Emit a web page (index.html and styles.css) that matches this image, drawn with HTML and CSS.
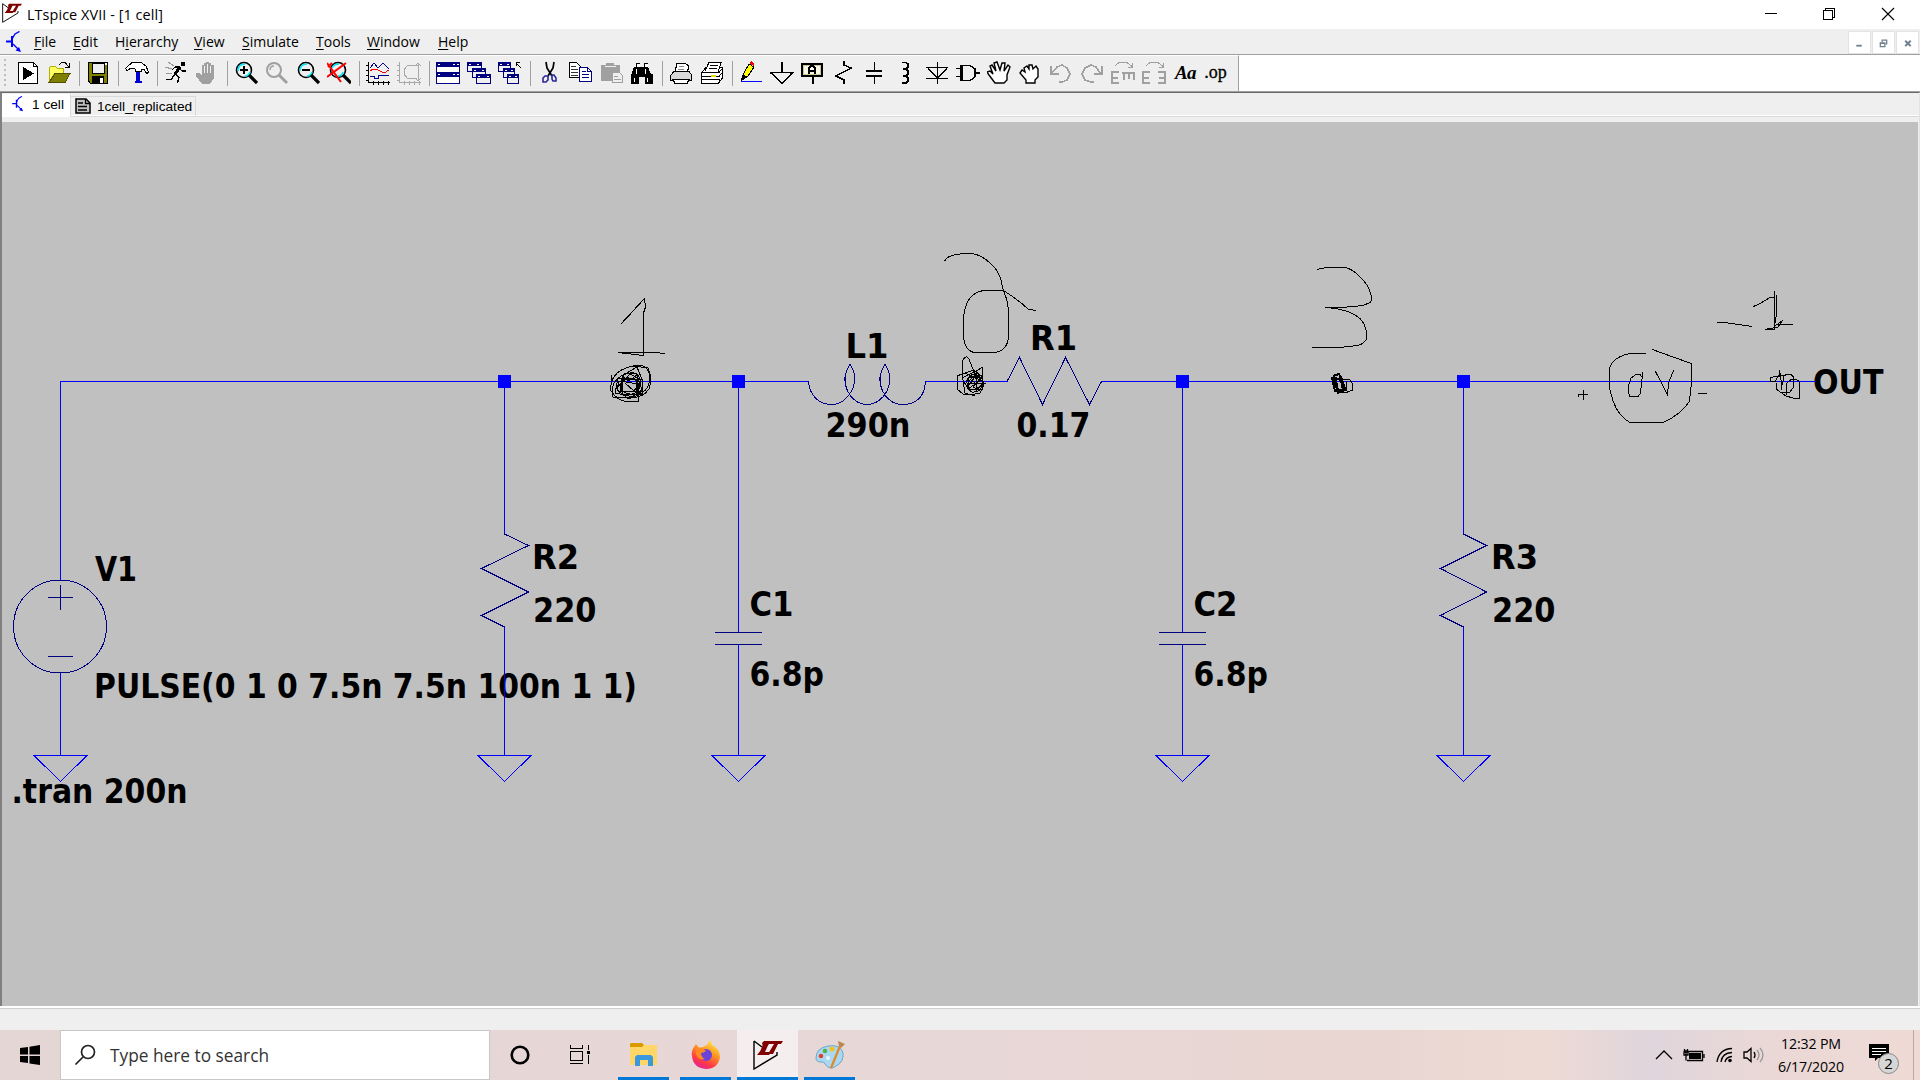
FILE: index.html
```html
<!DOCTYPE html>
<html lang="en">
<head>
<meta charset="utf-8">
<title>LTspice XVII - [1 cell]</title>
<link rel="stylesheet" href="styles.css">
</head>
<body>
<svg class="defs" aria-hidden="true">
  <defs>
    <symbol id="lt" viewBox="0 0 30 30">
      <path d="M1 1V29L24 15V12M1 1L9 7" fill="none" stroke="#000" stroke-width="1.4"/>
      <path d="M11 1H17L12 12H18L16 15H4Q8 11 9 7Q10 5 9 3ZM16 1H30L28 4H25L20 14H15L21 4H16L13 8Z" fill="#800000"/>
    </symbol>
    <symbol id="transistor" viewBox="0 0 16 22">
      <path d="M0 10.500H6M6 5V16" fill="none" stroke="#0000ff" stroke-width="2"/>
      <path d="M6 8L9 3L13.500 .5M7 13L13 19" fill="none" stroke="#0000ff" stroke-width="1.400"/>
      <path d="M15 21L9.500 19.500L13 16Z" fill="#0000ff"/>
    </symbol>
    <symbol id="ground" viewBox="-28 0 56 28"><path d="M-26.500 .5H26.500L0 26.500Z"/></symbol>
  </defs>
</svg>
<div class="window">
  <header class="titlebar">
    <svg class="app-icon"><use href="#lt"/></svg>
    <span class="title">LTspice XVII - [1 cell]</span>
    <svg class="caption" viewBox="0 0 150 29"><path d="M5 13.500H17M63.500 10.500H72.500V19.500H63.500ZM65.500 10V8.500H74.500V17.500H73" shape-rendering="crispEdges"/><path d="M122 8L134 20M134 8L122 20"/></svg>
  </header>
  <nav class="menubar">
    <svg class="menu-icon"><use href="#transistor"/></svg>
    <span class="m-file"><u>F</u>ile</span><span class="m-edit"><u>E</u>dit</span><span class="m-hier">H<u>i</u>erarchy</span><span class="m-view"><u>V</u>iew</span><span class="m-sim"><u>S</u>imulate</span><span class="m-tools"><u>T</u>ools</span><span class="m-win"><u>W</u>indow</span><span class="m-help"><u>H</u>elp</span>
    <div class="mdi">
      <svg viewBox="0 0 23 23"><path d="M8 15H14" stroke-width="2"/></svg>
      <svg viewBox="0 0 23 23"><path d="M8 12H13V16H8ZM8 12.500H13M10 11V9H15V13H14" stroke-width="1.4"/></svg>
      <svg viewBox="0 0 23 23"><path d="M9 9.500L15 15.500M15 9.500L9 15.500" stroke-width="2.200"/></svg>
    </div>
  </nav>
  <div class="toolrow">
    <div class="toolbar">
      <div class="grip"></div>
      <svg viewBox="0 0 24 24"><path d="M2.500 1.500H17.500L21.500 5.500V22.500H2.500Z" fill="#fff" stroke="#000"/><path d="M17.500 1.500V5.500H21.500" fill="none" stroke="#000"/><path d="M7 6L18 12.500L7 19Z"/></svg>
      <svg viewBox="0 0 24 24"><path d="M2 21V7L4 5H8L10 7H16V12H8Z" fill="#ffff60" stroke="#b0b000"/><path d="M2 21.500L8 12.500H23L18 21.500Z" fill="#808000" stroke="#505000"/><path d="M12 3.500L15 1.500H18L22 6M22.500 2V6.500H18" fill="none" stroke="#000"/></svg>
      <i></i>
      <svg viewBox="0 0 24 24"><path d="M2.500 1.500H21.500V22.500H4.500L2.500 20Z" fill="#808000" stroke="#000"/><path d="M6.500 2H18.500V12H6.500Z" fill="#efefef" stroke="#000"/><path d="M6 15H18V22H6Z"/><path d="M14 17H17V22H14ZM19 2H21V4H19Z" fill="#fff"/></svg>
      <i></i>
      <svg viewBox="0 0 24 24"><path d="M.5 7.500L6.500 2L16 1.500L21 5L23.500 11L22 13L19 8.500H16V10H10V8L5 7.500L2 10Z" fill="#fff" stroke="#000"/><path d="M11 11H15V20H17V22H10V20H11Z" fill="#0000d0"/></svg>
      <i></i>
      <svg viewBox="0 0 24 24"><path d="M17 1H21V5H17Z"/><path d="M16 6L11 13" fill="none" stroke="#000" stroke-width="3"/><path d="M11 13L15 16L13.500 22M11 13L7 18.500H2M16 6L11 6L8 9M16 8L18 10H22" fill="none" stroke="#000" stroke-width="1.400"/><path d="M4 1L10 5M1 6L8 8M2 12H8" fill="none" stroke="#999"/></svg>
      <svg viewBox="0 0 24 24"><path d="M7 22L1 14V12H4L7 15V4H9V12V2H11V11V1H13V11V2H15V12V4H18V18L15 22Z" fill="#a0a0a0" stroke="#a0a0a0"/><path d="M9.500 5V12M12.500 3V12M15.500 5V12" stroke="#efefef"/></svg>
      <i></i>
      <svg class="soft" viewBox="0 0 24 24"><circle cx="10" cy="9" r="7.500" fill="#efefef" stroke="#000" stroke-width="1.600"/><path d="M4 10Q4 3 11 3M16 11Q15 15 11 15" stroke="#00e8f8" fill="none" stroke-width="1.600"/><path d="M10 5V13M6 9H14" stroke="#000" stroke-width="2"/><path d="M15 14L23 22" stroke="#000" stroke-width="3.200"/></svg>
      <svg class="soft" viewBox="0 0 24 24"><circle cx="9" cy="9" r="7" fill="none" stroke="#a0a0a0" stroke-width="2"/><path d="M5 9Q5 5 9 5" fill="none" stroke="#a0a0a0" stroke-width="1.500"/><path d="M14 14L22 22" fill="none" stroke="#a0a0a0" stroke-width="3"/></svg>
      <svg class="soft" viewBox="0 0 24 24"><circle cx="10" cy="9" r="7.500" fill="#efefef" stroke="#000" stroke-width="1.600"/><path d="M4 10Q4 3 11 3M16 11Q15 15 11 15" stroke="#00e8f8" fill="none" stroke-width="1.600"/><path d="M6 9H14" stroke="#000" stroke-width="2"/><path d="M15 14L23 22" stroke="#000" stroke-width="3.200"/></svg>
      <svg class="soft" viewBox="0 0 24 24"><circle cx="11" cy="9" r="7.500" fill="#efefef" stroke="#000" stroke-width="1.600"/><path d="M5 7Q7 3 12 3M16 11Q15 15 11 15" stroke="#00e8f8" fill="none" stroke-width="1.600"/><path d="M16 14L24 22" stroke="#000" stroke-width="3.200"/><path d="M0 2L14 21M19 2L0 16M1 6L5 2" stroke="#f00" stroke-width="2"/></svg>
      <i></i>
      <svg viewBox="0 0 24 24"><path d="M2.500 1V21.500H24M0 4.500H3M0 9.500H3M0 14.500H3M0 19.500H3M7.500 20V24M12.500 20V24M17.500 20V24M22.500 20V24" fill="none" stroke="#000"/><path d="M4 7L8 2L12 7L17 2L23 8M4 15H8V17H12V14H23" fill="none" stroke="#000090"/><path d="M4 10L7 8L12 9L18 12L23 9" fill="none" stroke="#f00"/></svg>
      <svg viewBox="0 0 24 24"><path d="M2.500 1V21.500H24M0 4.500H3M0 9.500H3M0 14.500H3M0 19.500H3M7.500 20V24M12.500 20V24M17.500 20V24M22.500 20V24M21 2V20M21 4L10 5L7 9V13L10 17L20 18M18 5L21 2L24 5M18 17L21 20L24 17M7 8V14" fill="none" stroke="#a8a8a8"/></svg>
      <i></i>
      <svg viewBox="0 0 24 24"><path d="M.5 1.500H23.500V22.500H.5Z" fill="#fff" stroke="#000080"/><path d="M0 1H24V6H0ZM0 11H24V16H0Z" fill="#000080"/><path d="M2 3H4M17 3H19M21 3H23M2 13H4M17 13H19M21 13H23" stroke="#fff"/></svg>
      <svg viewBox="0 0 24 24"><path d="M.5 1.500H14.500V10.500H.5ZM5.500 7.500H18.500V16.500H5.500ZM9.500 13.500H23.500V22.500H9.500Z" fill="#efefef" stroke="#000080"/><path d="M0 1H15V5H0ZM5 7H19V11H5ZM9 13H24V17H9Z" fill="#000080"/><path d="M2 3H4M10 3H12M7 9H9M15 9H17M11 15H13M20 15H22" stroke="#fff"/></svg>
      <svg viewBox="0 0 24 24"><path d="M.5 1.500H12.500V10.500H.5ZM5.500 7.500H16.500V16.500H5.500ZM9.500 13.500H20.500V22.500H9.500Z" fill="#efefef" stroke="#000080"/><path d="M0 1H13V5H0ZM5 7H17V11H5ZM9 13H21V17H9Z" fill="#000080"/><path d="M2 3H4M9 3H11M7 9H9M13 9H15M11 15H13M17 15H19" stroke="#fff"/><path d="M18 5V1.500H22M18 2L23 7" stroke="#000" fill="none"/></svg>
      <i></i>
      <svg class="soft" viewBox="0 0 24 24"><path d="M9 1L10 7L15 15M17 1L16 7L11 15" fill="none" stroke="#000" stroke-width="1.700"/><path d="M8 15H11V19L9 21H6V17ZM15 14H17L19 17V20H16L15 18Z" fill="none" stroke="#28289a" stroke-width="1.600"/></svg>
      <svg viewBox="0 0 24 24"><path d="M1.500 1.500H8.500L12.500 5.500V16.500H1.500Z" fill="#fff" stroke="#000"/><path d="M3 5H8M3 8H10M3 11H10M3 14H10" stroke="#333"/><path d="M11.500 6.500H19.500L23.500 10.500V20.500H11.500Z" fill="#fff" stroke="#000080"/><path d="M14 10H18M14 13H21M14 16H21M19.500 7V10.500H23" stroke="#000080" fill="none"/></svg>
      <svg viewBox="0 0 24 24"><path d="M2 4H7V2H15V4H21V20H2Z" fill="#a0a0a0"/><path d="M6 5.500H17" stroke="#efefef"/><path d="M13.500 11.500H20.500L23.500 14.500V21.500H13.500Z" fill="#efefef" stroke="#a0a0a0"/><path d="M15 15H19M15 18H22" stroke="#a0a0a0"/></svg>
      <svg viewBox="0 0 24 24"><path d="M6 2H10V6H14V2H18V6L21 13H23V23H15V16H9V23H1V14L4 6H6Z"/><path d="M7 3H9V5H7ZM15 3H17V5H15ZM6 8V13M15 8V13M4 17V21M17 17V21" fill="#fff" stroke="#fff"/></svg>
      <i></i>
      <svg viewBox="0 0 24 24"><path d="M6 11L8 2H16L20 5L18 12" fill="#fff" stroke="#000"/><path d="M1.500 14.500L5 10.500H20L22.500 13.500V19.500H1.500Z" fill="#d8d8d8" stroke="#000"/><path d="M4 18.500H20L18 22.500H6Z" fill="#fff" stroke="#000"/><path d="M10 5H15M9 8H15" stroke="#888"/></svg>
      <svg viewBox="0 0 24 24"><path d="M1.500 11.500L6 6.500H22.500V17L18 22.500H1.500Z" fill="#fff" stroke="#000"/><path d="M5 10L9 1.500H21L18 11" fill="#fff" stroke="#000"/><path d="M10 4.500H18M9 7.500H17M2 11.500H19L22 8M2 15.500H19L22 12M2 18.500H19V22" fill="none" stroke="#000"/><path d="M11 15H16" stroke="#e0e000" stroke-width="2"/></svg>
      <i></i>
      <svg viewBox="0 0 24 24"><path d="M3 19L5 12L10 3L15 6L9 15Z" fill="#ff0" stroke="#000"/><path d="M10 2L12 0L15 2V5Z" fill="#f00"/><path d="M2 19L4 13L7 16Z"/><path d="M2 20.500H23" stroke="#00f"/></svg>
      <svg viewBox="0 0 24 24"><path d="M12 1V12M.5 11.500H22.500L12 22.500Z" fill="none" stroke="#000" stroke-width="1.500"/></svg>
      <svg viewBox="0 0 24 24"><path d="M1 3H21V15H1ZM11.500 15V23" fill="none" stroke="#000" stroke-width="2"/><path d="M2.500 4.500H19.500V13.500H2.500Z" fill="#f8f8e8" stroke="#c8c890"/><path d="M8 13V7L10 5H12L14 7V13M8 10H14" fill="none" stroke="#000" stroke-width="2"/></svg>
      <svg viewBox="0 0 24 24"><path d="M12 0V4L19 7L4 15L12 19V23" fill="none" stroke="#000" stroke-width="1.400"/></svg>
      <svg viewBox="0 0 24 24"><path d="M11.500 1V10M11.500 14V23" stroke="#000"/><path d="M3 9.500H19M3 14.500H19" stroke="#000" stroke-width="2"/></svg>
      <svg viewBox="0 0 24 24"><path d="M8 1.500H12L14 3V6L12 8H9M12 8L14 10V13L12 15H9M12 15L14 17V20L12 22H8" fill="none" stroke="#000" stroke-width="1.600"/></svg>
      <svg viewBox="0 0 24 24"><path d="M12.500 1V23M1 6.500H23M1 17.500H23M3 7L12.500 17L22 7" fill="none" stroke="#000" stroke-width="1.400"/></svg>
      <svg viewBox="0 0 24 24"><path d="M5 4.500H14L19 8V16L14 19.500H5ZM0 7.500H5M0 15.500H5M19 12H24M6 5V19" fill="none" stroke="#000" stroke-width="1.400"/></svg>
      <svg class="soft" viewBox="0 0 24 24"><path d="M8 22L2 14L0 11L3 10L6 13L3 5L5 4L9 10L7 2L10 1L13 9L15 2L18 2L17 10L21 4L23 6L20 14V19L17 22Z" fill="#fff" stroke="#000" stroke-width="1.400"/></svg>
      <svg class="soft" viewBox="0 0 24 24"><path d="M8 22V19L2 12L4 9L7 11L6 7L9 5L11 8V4L14 4L15 8L18 5L20 8V16L17 19V22Z" fill="#fff" stroke="#000" stroke-width="1.400"/></svg>
      <svg viewBox="0 0 24 24"><path d="M3 12L8 6L13 4L18 7L21 13L18 19L13 21H10M2 5V13H10" fill="none" stroke="#a0a0a0" stroke-width="1.600"/></svg>
      <svg viewBox="0 0 24 24"><path d="M20 12L16 6L11 4L5 7L2 13L5 19L11 21H14M22 5V13H14" fill="none" stroke="#a0a0a0" stroke-width="1.600"/></svg>
      <svg viewBox="0 0 24 24"><path d="M8 11H1V22H8M1 16.500H7M11 12H24M13 11V19M18 12V18M23 11V19" fill="none" stroke="#a0a0a0" stroke-width="2"/><path d="M4 5L8 1.500H16L21 5.500M21 2V6H17" fill="none" stroke="#a0a0a0"/></svg>
      <svg viewBox="0 0 24 24"><path d="M8 11H1V22H8M1 16.500H7M16 11H23V22H16M23 16.500H17" fill="none" stroke="#a0a0a0" stroke-width="2"/><path d="M4 5L8 1.500H16L21 5.500M21 2V6H17" fill="none" stroke="#a0a0a0"/></svg>
      <b class="aa">Aa</b>
      <b class="op">.op</b>
    </div>
  </div>
  <main class="workspace">
    <div class="tabs">
      <div class="tab active"><svg><use href="#transistor"/></svg><span>1 cell</span></div>
      <div class="tab"><svg viewBox="0 0 16 16"><path d="M1 1H11L15 5V15H1Z" fill="#c0c0c0" stroke="#000" stroke-width="1.500"/><path d="M10.500 1V5.500H15M3 5H8M3 8.500H12M3 12H12" fill="none" stroke="#000" stroke-width="1.300"/></svg><span>1cell_replicated</span></div>
    </div>
    <svg class="schematic" viewBox="2 122 1916 884">
      <g class="labels">
        <text x="95" y="581" textLength="42" lengthAdjust="spacingAndGlyphs">V1</text>
        <text x="94" y="697.500" textLength="543" lengthAdjust="spacingAndGlyphs">PULSE(0 1 0 7.5n 7.5n 100n 1 1)</text>
        <text x="11.500" y="803" textLength="176" lengthAdjust="spacingAndGlyphs">.tran 200n</text>
        <text x="532" y="569" textLength="47" lengthAdjust="spacingAndGlyphs">R2</text><text x="533" y="622" textLength="63.500" lengthAdjust="spacingAndGlyphs">220</text>
        <text x="749.500" y="615.500" textLength="44" lengthAdjust="spacingAndGlyphs">C1</text><text x="749.500" y="686" textLength="74.500" lengthAdjust="spacingAndGlyphs">6.8p</text>
        <text x="845.500" y="358" textLength="43" lengthAdjust="spacingAndGlyphs">L1</text><text x="825.500" y="437" textLength="85" lengthAdjust="spacingAndGlyphs">290n</text>
        <text x="1030" y="350" textLength="47" lengthAdjust="spacingAndGlyphs">R1</text><text x="1016.500" y="437" textLength="74" lengthAdjust="spacingAndGlyphs">0.17</text>
        <text x="1193.500" y="615.500" textLength="44" lengthAdjust="spacingAndGlyphs">C2</text><text x="1193.500" y="686" textLength="74.500" lengthAdjust="spacingAndGlyphs">6.8p</text>
        <text x="1491" y="569" textLength="47" lengthAdjust="spacingAndGlyphs">R3</text><text x="1492" y="622" textLength="63.500" lengthAdjust="spacingAndGlyphs">220</text>
        <text x="1813" y="394" textLength="70.500" lengthAdjust="spacingAndGlyphs">OUT</text>
      </g>
      <g class="wire">
        <path d="M60.500 580V381.500H808M926 381.500H1007M1101 381.500H1816M60.500 673V755M504.500 381V533M504.500 627V755M738.500 381V632M738.500 645V755M1182.500 381V632M1182.500 645V755M1463.500 381V533M1463.500 627V755"/>
        <use href="#ground" x="32.500" y="755" width="56" height="28"/><use href="#ground" x="476.500" y="755" width="56" height="28"/><use href="#ground" x="710.500" y="755" width="56" height="28"/><use href="#ground" x="1154.500" y="755" width="56" height="28"/><use href="#ground" x="1435.500" y="755" width="56" height="28"/>
      </g>
      <path class="node" d="M498 375h13v13h-13ZM732 375h13v13h-13ZM1176 375h13v13h-13ZM1457 375h13v13h-13Z"/>
      <g class="part">
        <circle cx="60" cy="626.500" r="46.500"/>
        <path d="M48 597.500H73M60.500 585V610M48 656.500H73M715 632.500H762M715 644.500H762M1159 632.500H1206M1159 644.500H1206"/>
        <path d="M504.500 533V534L528.500 545.500L481.500 568.500L528.500 592L481.500 615.500L504.500 627M1463.500 533V534L1486.500 545.500L1440.500 568.500L1486.500 592L1440.500 615.500L1463.500 627"/>
        <path d="M808.500 381.500C810 397 820 404.500 832 404.500C848 404.500 862 382 850 364.500C838 382 850 404.500 867 404.500C884 404.500 897 382 885 364.500C873 382 885 404.500 902 404.500C917 404.500 924.500 397 925.500 381.500"/>
        <path d="M1007 381.500L1019.500 357.500L1042.500 404.500L1065.500 357.500L1089.500 404.500L1101.500 381.500"/>
      </g>
      <g class="ink">
        <path d="M620.500 324.500L644.500 298.500L645.500 307L643.500 313V355.500L618 352.500H655L665 353.500M620.500 324.500L624 321L642 301"/>
        <path d="M944.500 261.500Q946 256 957 254.500Q975 251 985 259Q996 266 1000.500 278L1003.500 291Q1008.500 301 1008.500 315V336Q1008 350 995.500 352.500H974Q964 350 963.500 335V318Q966 291 986 290.500H1003.500C1012 296 1020 301 1028 309L1036 310.500"/>
        <path d="M1317.500 269.500Q1328 266 1346 267.500Q1357 271 1367 285Q1376 302 1367.500 303.500Q1362 307.500 1325 307.500Q1350 309 1360.500 319Q1368 328 1366.500 339Q1364 344 1358 345.500L1340 347.500H1312"/>
        <path d="M1717 322.500H1724L1752 326.500M1753.500 306.500L1761 303L1770 297.500H1774.500V291M1774.500 296V329.500H1765L1778 327L1782.500 320.500L1776.500 325L1793 324.500M1776.500 295V311L1775.500 323"/>
        <path d="M1646.500 354.500L1645 353.500H1630Q1613 357 1609.500 368V388L1613 401Q1619 417 1630 422.500H1663Q1682 414 1689.500 401L1691.500 382V363.500L1673 357L1652.500 349.500"/>
        <path d="M1642.500 371.500V375L1640.500 393L1638 396.500H1630L1628.500 393V386L1631 378L1636 374.500H1640L1641.500 377M1655.500 371.500L1667.500 394.500L1668.500 383L1673.500 370.500M1583.500 390V400M1578.500 397V394.500H1588M1698 393.500H1707"/>
        <path d="M612 381Q616 369 634 366L648 368Q653 379 649 389Q642 399 630 397L613 397Q609 381 625 374L637 367L643 382Q644 393 634 397L615 393L618 378H634L642 388V394H622V376L629 381L637 375V397M612 375L610.500 390Q619 404 632 401H638.500V384L619 381L617 390L629 399L642 390L636 373L624 374L620 393M621 379H636V391H621ZM633 366Q650 362 650 380Q648 392 637 395M625 383L634 391L641 380L630 374L616 389M623 375Q639 368 641 383Q637 400 622 391Q617 382 629 377"/>
        <path d="M963 380L962.500 361Q966 354 969 359L974 372L974.500 375.500H982V367.500L974 372.500M957 376V389L963 394L970 395L980 393L984 385L982 377L974 370L962 374L957 376M963 380L965 393L975 396M974 372L981 380L968 389L962 378L976 371V391L984 382L965 373M986 383H971L978 372L968 386M968 377H982V389H969ZM966 383Q971 368 982 379Q984 393 972 392Q962 386 973 377M970 376L979 390L973 387L983 376"/>
        <path class="heavy" d="M1333 376L1339 374L1342 379L1345 389L1335 391L1332 378L1340 379L1344 390L1338 393L1334 380L1341 378L1343 391L1337 389L1336 377"/>
        <path d="M1343 379L1350 380L1352.500 384V390L1345 393L1338 391M1340 378L1346 391V381"/>
        <path d="M1770.500 381.500V378L1774 376.500H1780L1779.500 370L1781 380V388.500M1770.500 381.500H1775L1779 375L1784 376L1781 390M1776 383V389L1786 396L1793 398H1799V381L1796 379.500H1791L1786 384V395M1783 377L1786 374.500H1791L1793.500 377V387L1790 392H1780"/>
      </g>
    </svg>
  </main>
  <footer class="status"></footer>
</div>
<div class="taskbar">
  <div class="start"><svg viewBox="0 0 22 22"><path d="M1 4L9 3V10.500H1ZM10.500 2.800L21 1V10.500H10.500ZM1 12H9V19L1 18ZM10.500 12H21V21L10.500 19.500Z"/></svg></div>
  <div class="search"><svg viewBox="0 0 22 22"><circle cx="14" cy="8" r="6.500" fill="none" stroke="#222" stroke-width="1.700"/><path d="M9 13L1.500 20.500" stroke="#222" stroke-width="1.700"/></svg><span>Type here to search</span></div>
  <div class="slot plain"><svg viewBox="0 0 30 30"><circle cx="15" cy="15" r="8.300" fill="none" stroke="#000" stroke-width="2.600"/></svg></div>
  <div class="slot plain tv"><svg viewBox="0 0 30 30" shape-rendering="crispEdges"><path d="M5.500 5V8.500H17.500V5M5.500 11.500H17.500V20.500H5.500ZM5.500 24V23.500H17.500V24M23.500 5V10M23.500 15V24" fill="none" stroke="#000"/><path d="M22 11H25V14H22Z"/></svg></div>
  <div class="slot open"><svg viewBox="0 0 30 30"><path d="M1 4L2 3H13L15 5V8H1Z" fill="#d99a00"/><path d="M1 7H13L15 5H28V25H1Z" fill="#ffd768"/><path d="M6 26V17L8 15H22L24 17V26H19V20H11V26Z" fill="#3c98dc"/></svg></div>
  <div class="slot open"><svg viewBox="0 0 30 30"><defs><linearGradient id="fx" x1=".8" y1="0" x2=".3" y2="1"><stop offset="0" stop-color="#fff24a"/><stop offset=".4" stop-color="#ff9a22"/><stop offset=".75" stop-color="#ff3b45"/><stop offset="1" stop-color="#e0209a"/></linearGradient></defs><path d="M3 7L5 4L8 8L12 7L16 5L19 0L21 5Q29 9 29 17Q27 29 15 29Q2 28 1 16Q0 11 3 7Z" fill="url(#fx)"/><circle cx="15" cy="15" r="6" fill="#6a43d8"/><path d="M4 7L11 8L15 11Q12 13 10 13Q10 17 14 19Q7 21 5 14Z" fill="#ff8a20"/></svg></div>
  <div class="slot open current"><svg viewBox="0 0 30 30"><use href="#lt"/></svg></div>
  <div class="slot open"><svg viewBox="0 0 30 30"><path d="M1 18Q1 8 13 6Q26 4 28 13Q29 22 21 26Q15 31 10 24Q9 21 6 22Q1 22 1 18Z" fill="#a9d8f0" stroke="#6ba7c8"/><circle cx="6" cy="16" r="2.300" fill="#e04030"/><circle cx="10" cy="11" r="2.300" fill="#50b040"/><circle cx="17" cy="9" r="2.500" fill="#f5c020"/><circle cx="13" cy="18" r="2" fill="#e8f4f8"/><path d="M16 28L25 6" stroke="#e08828" stroke-width="2.200"/><path d="M23 1L30 4L26 8L24 6Z" fill="#b98752"/></svg></div>
  <div class="tray">
    <svg class="tray-icons" viewBox="0 0 116 30"><g fill="none" stroke="#000" stroke-width="1.300"><path d="M3 19L11 11L19 19"/><path d="M34 11.500H49.500V20.500H34M51 14V18M33 10V20.500M31 12H35V15H31ZM31.500 9V12M34.500 9V12"/><path d="M64 22Q66 9 79 8.500M68 22Q69 13 79 12.500M72 22Q73 17 79 16.500"/><path d="M91 12H94L98 8.500V21.500L94 18H91ZM101 12Q103 15 101 18"/><path d="M104 10Q108 15 104 20M107 8Q113 15 107 22" stroke="#999"/></g><path d="M36 13H48V19H36Z"/><circle cx="77" cy="20.500" r="1.800"/></svg>
    <div class="clock"><span>12:32 PM</span><span>6/17/2020</span></div>
    <svg class="notify" viewBox="0 0 34 34"><path d="M2 3H22V17H11L8 20V17H2Z"/><path d="M5 7.500H19M5 10.500H19M5 13.500H14" stroke="#fff"/><circle cx="21.500" cy="22.500" r="10" fill="#d6d6d6" stroke="#888"/><text x="21.500" y="27.500" text-anchor="middle">2</text></svg>
    <div class="peek"></div>
  </div>
</div>
</body>
</html>
```
FILE: styles.css
```css
* { box-sizing: border-box; }
body { margin: 0; width: 1920px; height: 1080px; overflow: hidden; display: flex; flex-direction: column; background: #efefef; color: #000; font-family: "Open Sans", "Noto Sans", sans-serif; }
svg { display: block; flex: none; }
.defs { width: 0; height: 0; position: absolute; }
.window { flex: 1; display: flex; flex-direction: column; }

.titlebar { height: 29px; background: #fff; display: flex; align-items: center; }
.app-icon { width: 20px; height: 20px; margin: 0 5px 3px 2px; }
.title { flex: 1; font-size: 14.4px; letter-spacing: .08px; line-height: 29px; white-space: pre; }
.caption { width: 150px; height: 29px; margin-right: 10px; fill: none; stroke: #000; stroke-width: 1.1; }

.menubar { height: 25px; display: flex; align-items: center; padding-left: 6px; font-size: 14px; }
.menu-icon { width: 16px; height: 22px; margin-right: 12px; }
.menubar > span { white-space: nowrap; line-height: 25px; letter-spacing: 0; }
.menubar u { text-underline-offset: 2px; text-decoration-thickness: 1px; }
.m-file { width: 39px; }
.m-edit { width: 42px; }
.m-hier { width: 79px; }
.m-view { width: 48px; }
.m-sim { width: 74px; }
.m-tools { width: 51px; }
.m-win { width: 71px; }
.m-help { flex: 1; }
.mdi { display: flex; gap: 1px; padding: 1px 1px 0 0; }
.mdi svg { width: 23px; height: 23px; background: #fff; border: 1px solid #e3e3e3; fill: none; stroke: #708090; }

.toolrow { height: 38px; background: #fff; border-top: 1px solid #a0a0a0; border-bottom: 1px solid #a0a0a0; display: flex; }
.toolbar { width: 1239px; height: 36px; padding-bottom: 1px; background: #efefef; border-right: 1px solid #a0a0a0; border-top: 1px solid #fff; display: flex; align-items: center; }
.grip { width: 2px; height: 28px; margin: 0 7px 0 4px; background: repeating-linear-gradient(#bdbdbd 0 2px, #efefef 2px 5px); }
.toolbar svg { width: 24px; height: 24px; margin: 0 4px 0 3px; shape-rendering: crispEdges; }
.toolbar svg.soft { shape-rendering: auto; }
.toolbar i { width: 1px; height: 25px; margin: 0 3px 0 4px; background: #a0a0a0; }
.toolbar b { width: 31px; text-align: center; font-family: "Liberation Serif", serif; line-height: 28px; }
.toolbar .aa { font-size: 19px; font-style: italic; letter-spacing: -.5px; }
.toolbar .op { font-size: 18px; font-weight: 400; -webkit-text-stroke: .3px #000; line-height: 24px; padding-bottom: 3px; margin-left: -1px; }

.workspace { flex: 1; display: flex; flex-direction: column; border: solid; border-width: 1px 1px 0 2px; border-color: #696969 #e3e3e3 #fff #808080; }
.tabs { height: 29px; display: flex; align-items: flex-start; padding-top: 1px; border-bottom: 5px solid #efefef; box-shadow: inset 0 -1px #d9d9d9, inset 0 -2px #fff; font-family: "Liberation Sans", Arial, sans-serif; font-size: 13.7px; }
.tab { display: flex; align-items: center; height: 21px; margin-top: 2px; border: 1px solid #d9d9d9; border-left: 0; width: 125px; padding: 0 0 1px 4px; }
.tab svg { width: 16px; height: 16px; margin-right: 6px; }
.tab.active { width: 69px; height: 23px; margin-top: 0; padding: 0 0 3px 8px; border: 0; border-right: 1px solid #d9d9d9; background: #fff; }
.schematic { width: 1916px; height: 884px; background: #c0c0c0; }
.labels { font-family: "DejaVu Sans Condensed", "DejaVu Sans", sans-serif; font-stretch: condensed; font-weight: 700; font-size: 33px; }
.wire { stroke: #0000ff; fill: none; shape-rendering: crispEdges; }
.node { fill: #0000ff; }
.part { stroke: #000080; fill: none; shape-rendering: crispEdges; }
.ink { stroke: #000; fill: none; shape-rendering: crispEdges; }
.heavy { stroke-width: 2; }
.status { height: 24px; background: #efefef; border-top: 1px solid #fff; box-shadow: inset 0 1px #fff, inset 0 2px #d0d0d0; }

.taskbar { height: 50px; display: flex; background: linear-gradient(90deg, #e5d6d6 0, #e7d7d6 50%, #e9d6d2 72%, #eedad4 80%, #e0d5dc 86%, #ead8d6 92%, #efdad5 100%); }
.start { width: 60px; display: flex; align-items: center; padding-left: 19px; }
.start svg { width: 22px; height: 22px; }
.search { width: 430px; height: 50px; border: 1px solid #c8c8c8; background: #fff; display: flex; align-items: center; padding-left: 13px; font-size: 17.3px; color: #333; }
.search svg { width: 22px; height: 22px; margin-right: 14px; }
.slot { width: 61px; height: 50px; margin-right: 1px; display: flex; justify-content: center; align-items: center; }
.slot svg { width: 30px; height: 30px; }
.slot.plain { width: 60px; margin-right: 0; }
.slot.tv { margin-right: 3px; }
.slot.open { background: linear-gradient(#0078d7, #0078d7) center bottom / 51px 3px no-repeat; }
.slot.current { background: linear-gradient(#0078d7, #0078d7) center bottom / 61px 3px no-repeat, #f5eeee; }
.tray { margin-left: auto; display: flex; align-items: center; }
.tray-icons { width: 116px; height: 30px; margin-right: 6px; }
.clock { width: 72px; display: flex; flex-direction: column; align-items: center; font-size: 14.2px; line-height: 23px; letter-spacing: -.15px; margin-top: -1px; }
.notify { width: 34px; height: 34px; margin: 5px 12px 0 20px; }
.notify text { font: 15px "Open Sans", sans-serif; }
.peek { width: 7px; height: 50px; border-left: 1px solid #b8aaa8; }
```
